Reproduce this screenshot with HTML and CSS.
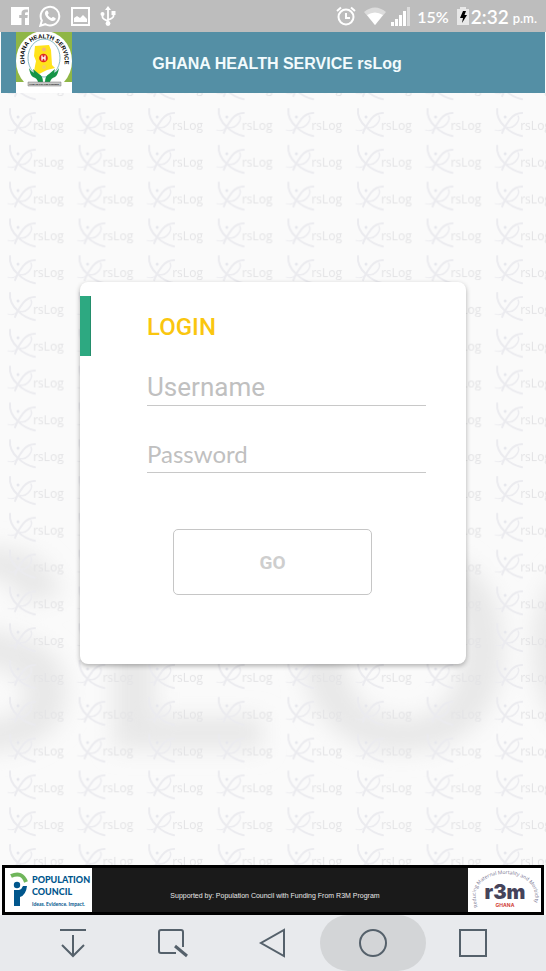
FILE: index.html
```
<!DOCTYPE html>
<html lang="en">
<head>
  <meta charset="UTF-8" />
  <meta name="viewport" content="width=device-width, initial-scale=1" />
  <title>GHANA HEALTH SERVICE rsLog</title>
  <link rel="stylesheet" href="styles.css">
</head>
<body>

<div class="status-bar">
  <svg class="facebook" width="18" height="18" viewBox="0 0 18 18"><path fill="#fff" d="M0 0h18v18h-4v-7h2.400l.4-3H14V6.500q0-1.300 1.400-1.300h1.500V2.600q-6.400-1-6.400 3.400v2H8.200v3h2.300v7H0z"/></svg>
  <svg class="whatsapp" width="22" height="22" viewBox="0 0 22 22"><path fill="none" stroke="#fff" stroke-width="2" d="M1.300 20.700 2.800 15.600A9.300 9.300 0 1 1 6.300 19.200z"/><path fill="#fff" d="M7.200 5.700c.7-.5 1.300-.3 1.600.4l.8 1.900c.2.700-.8 1.300-.8 1.700.8 1.700 2 2.700 3.700 3.400.6.100 1.200-1.500 1.800-1.200l2 1c1 .5 0 2.200-.8 2.700-1.600.9-4.200.1-6.300-1.700-2-1.800-3.400-4.100-3.300-6 .1-.9.600-1.700 1.300-2.200z"/></svg>
  <svg class="gallery" width="19" height="19" viewBox="0 0 19 19"><path fill="none" stroke="#fff" stroke-width="2" d="M1 1h17v17H1z"/><path fill="#fff" d="M3 15v-4l3-2 3 2 3-3 4 4v3z"/></svg>
  <svg class="usb" width="16" height="20" viewBox="0 0 16 20"><g fill="none" stroke="#fff" stroke-width="1.800"><path d="M8 3v14M2.500 8v3q0 2 5.500 4M13.500 7v3q0 2-5.500 4"/></g><g fill="#fff"><path d="m8 0 3 4H5z"/><circle cx="2.500" cy="8" r="2"/><path d="M11.500 5h4v4h-4z"/><circle cx="8" cy="17.500" r="2.400"/></g></svg>
  <div class="status-right">
    <svg class="alarm" width="20" height="20" viewBox="0 0 20 20" fill="none" stroke="#fff" stroke-width="2"><circle cx="10" cy="11" r="7.500"/><path d="M1 5 5 1.500M19 5l-4-3.500M10 7v5h4"/></svg>
    <svg class="wifi" width="22" height="18" viewBox="0 0 22 18"><path fill="#dcdcdc" d="M0 5Q11-4 22 5L11 18z"/><path fill="#fff" d="M3 8q8-5 16 0l-8 10z"/></svg>
    <svg class="signal" width="19" height="19" viewBox="0 0 19 19"><path fill="#fff" d="M0 15h3v4H0zM4 12h3v7H4zM8 8h3v11H8zM12 4h3v15h-3z"/><path fill="#dcdcdc" d="M16 0h3v19h-3z"/></svg>
    <span class="percent">15%</span>
    <svg class="battery" width="12" height="18" viewBox="0 0 12 18"><path fill="#e8e8e8" d="M3 0h6v2h3v16H0V2h3z"/><path d="M6 4h3L7.500 8H10l-5 8 1-5H3z"/></svg>
    <span class="time">2:32</span>
    <span class="ampm">p.m.</span>
  </div>
</div>

<header class="header">
  <svg class="ghs-logo" width="56" height="61" viewBox="0 0 56 61">
    <path fill="#fff" d="M0 0h56v61H0z"/>
    <path fill="#8fb646" d="M0 0h56v50H0z"/>
    <ellipse cx="28" cy="29" rx="28" ry="30" fill="#fff"/>
    <path fill="#fff" d="M0 50h56v11H0z"/>
    <ellipse cx="28" cy="26" rx="16" ry="19" fill="#fff" stroke="#69a8b8" stroke-width=".8"/>
    <path id="ghsArc" fill="none" d="M9 32C1-3 55-3 48 36"/>
    <text class="ghs-name"><textPath href="#ghsArc">GHANA HEALTH SERVICE</textPath></text>
    <path fill="#ffe31b" d="m19 14 14-1 2 5 1 15 3 3-8 2-8 4-5-3 2-10-2-5z"/>
    <circle cx="28" cy="17.500" r="2" fill="#f5b47a"/>
    <circle cx="28" cy="35" r="2" fill="#f5cf62"/>
    <circle cx="27.500" cy="26" r="4.300" fill="#e02a20"/>
    <path stroke="#fff" stroke-width="1.300" d="M26 23.500v5M29 23.500v5M26 26h3"/>
    <path fill="#159447" d="M13 36q2 4 5 5l-1-4 6 5q4 2 4 8h-5q-1-4-5-5-3-2-4-9zM43 36q-2 4-5 5l1-4-6 5q-4 2-4 8h5q1-4 5-5 3-2 4-9z"/>
    <path fill="#c8c8c8" stroke="#777" stroke-width=".5" d="M12 50h33v4H12z"/>
    <text class="ghs-motto" x="28" y="53">YOUR HEALTH OUR CONCERN</text>
  </svg>
  <h1 class="title">GHANA HEALTH SERVICE rsLog</h1>
</header>

<main class="content">
  <svg class="backdrop" width="100%" height="100%" aria-hidden="true">
    <defs>
      <pattern id="mark" x="7" y="14" width="69.600" height="36.800" patternUnits="userSpaceOnUse">
        <g fill="none" stroke="#ebebef" stroke-linecap="round">
          <path stroke-width="2" d="M3 2q-1 10 8 18 7 7 17 9"/>
          <path stroke-width="2" d="M28 6q-7 0-12 6-6 8-8 14"/>
          <path stroke-width="1.500" d="M12 20q5 2 9-2 5-5 3-9"/>
          <path stroke-width="1" d="M1 23q5 2 9-2"/>
        </g>
        <circle cx="11" cy="10" r="1.500" fill="#e5e6ec"/>
        <text class="mark-text" x="26" y="23">rsLog</text>
      </pattern>
      <filter id="soft" x="-10%" y="-10%" width="120%" height="120%"><feGaussianBlur stdDeviation="11"/></filter>
    </defs>
    <text class="big-mark" x="-116 94 290 521" y="656" filter="url(#soft)">SLOG</text>
    <rect width="100%" height="100%" fill="url(#mark)"/>
  </svg>

  <div class="card">
    <div class="accent"></div>
    <form class="login-form">
      <h2>LOGIN</h2>
      <input type="text" class="username" placeholder="Username" aria-label="Username" />
      <input type="password" class="password" placeholder="Password" aria-label="Password" />
      <button type="button" class="go">GO</button>
    </form>
  </div>
</main>

<footer class="footer">
  <svg class="pc-logo" width="87" height="44" viewBox="0 0 87 44">
    <path fill="#fff" d="M0 0h87v44H0z"/>
    <path fill="none" stroke="#70b65b" stroke-width="4" d="M6 8q11-5 15 6"/>
    <circle cx="12" cy="17" r="3.200" fill="#00568c"/>
    <path fill="#00568c" d="M9 22h5q3-1 4-4h4q-1 9-7 11v9H9z"/>
    <g class="pc-name"><text x="27" y="15">POPULATION</text><text x="27" y="27">COUNCIL</text></g>
    <text class="pc-motto" x="27" y="38">Ideas. Evidence. Impact.</text>
  </svg>
  <p>Supported by: Population Council with Funding From R3M Program</p>
  <svg class="r3m-logo" width="73" height="44" viewBox="0 0 73 44">
    <path fill="#fff" d="M0 0h73v44H0z"/>
    <path id="r3mArc" fill="none" d="M10 39C-8-5 82-5 65 39"/>
    <text class="r3m-ring"><textPath href="#r3mArc">Reducing Maternal Mortality and Morbidity</textPath></text>
    <text class="r3m-name" x="37" y="31">r3m</text>
    <text class="r3m-country" x="37" y="39">GHANA</text>
  </svg>
</footer>

<nav class="nav-bar">
  <button type="button" aria-label="Notifications"><svg width="30" height="30" viewBox="0 0 30 30"><path d="M2 2h26M15 7v21M4 17l11 11 11-11"/></svg></button>
  <button type="button" aria-label="Capture"><svg width="30" height="30" viewBox="0 0 30 30"><path d="M18 25H3q-2 0-2-2V4q0-2 2-2h20q2 0 2 2v15"/><path stroke-width="3" d="m17 18 12 10"/></svg></button>
  <button type="button" aria-label="Back"><svg width="30" height="30" viewBox="0 0 30 30"><path d="M26 2v26L3 15z"/></svg></button>
  <button type="button" class="pressed" aria-label="Home"><svg width="30" height="30" viewBox="0 0 30 30"><circle cx="15" cy="15" r="13"/></svg></button>
  <button type="button" aria-label="Recent apps"><svg width="30" height="30" viewBox="0 0 30 30"><path d="M2 2h26v26H2z"/></svg></button>
</nav>

</body>
</html>
```
FILE: styles.css
```
* {
  box-sizing: border-box;
}
body {
  margin: 0;
  min-height: 100vh;
  display: flex;
  flex-direction: column;
  background: #fafafa;
  font-family: Roboto, sans-serif;
}
svg {
  display: block;
  flex-shrink: 0;
}

/* status bar */
.status-bar {
  display: flex;
  align-items: center;
  gap: 10px;
  height: 32px;
  padding: 0 9px 0 11px;
  background: #bdbdbd;
  color: #fff;
  font-family: Lato, sans-serif;
}
.status-right {
  display: flex;
  align-items: center;
  gap: 4px;
  margin-left: auto;
}
.wifi {
  margin: 0 1px 0 4px;
}
.percent {
  margin: 0 4px 0 3px;
  font-size: 16px;
  font-weight: 600;
}
.battery {
  margin-right: -2px;
}
.time {
  font-size: 19px;
  font-weight: 600;
}
.ampm {
  padding-top: 4px;
  font-size: 13px;
  font-weight: 600;
}

/* header */
.header {
  display: grid;
  grid-template-columns: 1fr auto 1fr;
  align-items: center;
  margin: 0 1px;
  padding: 0 7px 0 15px;
  background: #548fa5;
}
.title {
  margin: 0;
  padding-top: 2px;
  color: #f2fbfd;
  font: bold 16px "Liberation Sans", sans-serif;
}
.ghs-name {
  font: bold 6px "Liberation Sans", sans-serif;
}
.ghs-motto {
  font: bold 2px "Liberation Sans", sans-serif;
  text-anchor: middle;
}

/* login */
.content {
  position: relative;
  flex: 1;
  display: flex;
  align-items: center;
  justify-content: center;
  padding: 16px 16px 28px;
  overflow: hidden;
}
.backdrop {
  position: absolute;
  top: 0;
  left: 0;
}
.mark-text {
  fill: #e3e3e5;
  font: 12px "Open Sans", sans-serif;
}
.big-mark {
  fill: #e8e8e8;
  font: bold 290px "Liberation Sans", sans-serif;
}
.card {
  position: relative;
  display: flex;
  width: 100%;
  max-width: 386px;
  background: #fff;
  border-radius: 8px;
  box-shadow: 0 2px 5px rgba(0,0,0,0.3);
}
.accent {
  width: 11px;
  height: 60px;
  margin-top: 14px;
  background: #2da981;
  border-right: 1px solid #238d6b;
}
.login-form {
  flex: 1;
  display: flex;
  flex-direction: column;
  min-width: 0;
  padding: 31px 40px 69px 56px;
}
.login-form h2 {
  margin: 0 0 27px;
  color: #fac60f;
  font-size: 24px;
  font-weight: 500;
  line-height: 28px;
}
.login-form input {
  width: 100%;
  height: 38px;
  padding: 0;
  border: none;
  border-bottom: 1px solid #c8c8c8;
  border-radius: 0;
  background: none;
  color: #444;
  font-family: Roboto, sans-serif;
  font-size: 26px;
  outline: none;
}
.login-form .password {
  margin-top: 29px;
  font-family: Lato, sans-serif;
  font-size: 24px;
}
.login-form input::placeholder {
  color: #c0c0c0;
}
.go {
  height: 66px;
  margin: 56px 54px 0 26px;
  border: 1px solid #c6c6c6;
  border-radius: 5px;
  background: #fff;
  color: #cecece;
  font-family: Roboto, sans-serif;
  font-size: 19px;
  font-weight: 700;
}

/* footer */
.footer {
  display: flex;
  align-items: center;
  justify-content: space-between;
  margin: 0 2px;
  border: 3px solid #000;
  background: #1a1a1a;
}
.footer p {
  margin: 0;
  padding: 10px 10px 0 0;
  color: #e8e8e8;
  font: 7px "Liberation Sans", sans-serif;
}
.pc-name {
  fill: #00568c;
  font: 900 9px Lato, sans-serif;
}
.pc-motto {
  fill: #00568c;
  font: bold 5px Lato, sans-serif;
}
.r3m-ring {
  fill: #777490;
  font: 5px "Open Sans", sans-serif;
}
.r3m-name {
  fill: #45435a;
  font: 900 20px Inter, sans-serif;
  text-anchor: middle;
}
.r3m-country {
  fill: #d2463c;
  font: bold 5px Inter, sans-serif;
  text-anchor: middle;
}

/* navigation */
.nav-bar {
  display: grid;
  grid-template-columns: repeat(5, 1fr);
  height: 56px;
  padding: 0 23px;
  background: #e8eaed;
}
.nav-bar button {
  display: flex;
  align-items: center;
  justify-content: center;
  padding: 0;
  border: none;
  background: none;
}
.nav-bar svg {
  fill: none;
  stroke: #55616b;
  stroke-width: 2;
}
.nav-bar .pressed {
  margin: 0 -3px;
  border-radius: 28px;
  background: #d3d5d7;
}
```
